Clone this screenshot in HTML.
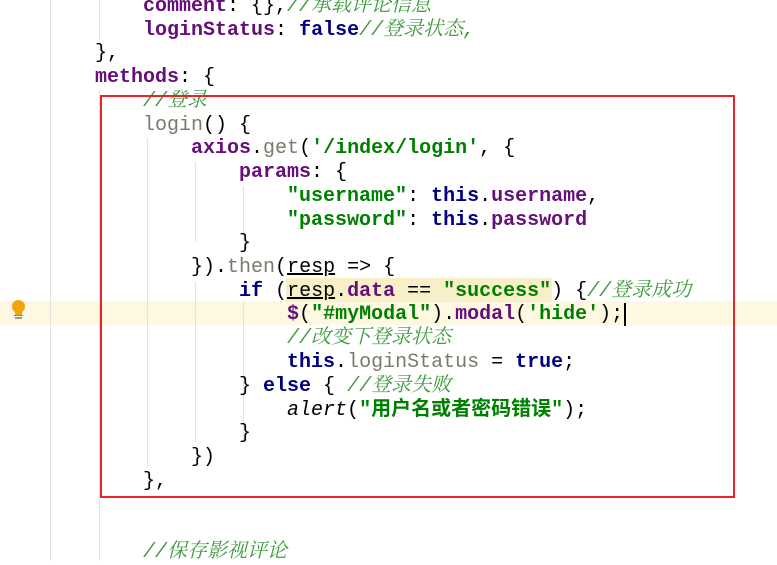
<!DOCTYPE html><html><head><meta charset="utf-8"><style>
body{margin:0;width:777px;height:561px;overflow:hidden;background:#fff;position:relative;font-family:"Liberation Mono","Noto Sans CJK SC",monospace;font-size:20px}
.ln{position:absolute;left:95px;height:24px;line-height:24px;white-space:pre;color:#000}
.k{color:#660e7a;font-weight:bold}.kw{color:#000080;font-weight:bold}.s{color:#008000;font-weight:bold}
.c{color:#3d9a3d;font-style:italic;font-family:"Liberation Mono","Noto Serif CJK SC",monospace}.g{color:#7a7a6a}
.u{text-decoration:underline}
.gl{position:absolute;width:1px;background:#e2e2e2}
</style></head><body>
<div style="position:absolute;left:0;top:301px;width:777px;height:24px;background:#fef8e2"></div>
<div style="position:absolute;left:286px;top:278px;width:266px;height:24px;background:#f6efc8"></div>
<div class="gl" style="left:50px;top:0;height:561px"></div>
<div class="gl" style="left:99px;top:0;height:40px"></div>
<div class="gl" style="left:99px;top:90px;height:471px"></div>
<div class="gl" style="left:147px;top:138px;height:330px"></div>
<div class="gl" style="left:195px;top:162px;height:80px"></div>
<div class="gl" style="left:195px;top:282px;height:160px"></div>
<div class="gl" style="left:243px;top:186px;height:56px"></div>
<div class="gl" style="left:243px;top:302px;height:140px"></div>
<div class="ln" style="top:-5px">    <span class="k">comment</span>: {},<span class="c">//承载评论信息</span></div>
<div class="ln" style="top:19px">    <span class="k">loginStatus</span>: <span class="kw">false</span><span class="c">//登录状态,</span></div>
<div class="ln" style="top:42px">},</div>
<div class="ln" style="top:66px"><span class="k">methods</span>: {</div>
<div class="ln" style="top:90px">    <span class="c">//登录</span></div>
<div class="ln" style="top:114px">    <span class="g">login</span>() {</div>
<div class="ln" style="top:137px">        <span class="k">axios</span>.<span class="g">get</span>(<span class="s">'/index/login'</span>, {</div>
<div class="ln" style="top:161px">            <span class="k">params</span>: {</div>
<div class="ln" style="top:185px">                <span class="s">"username"</span>: <span class="kw">this</span>.<span class="k">username</span>,</div>
<div class="ln" style="top:209px">                <span class="s">"password"</span>: <span class="kw">this</span>.<span class="k">password</span></div>
<div class="ln" style="top:232px">            }</div>
<div class="ln" style="top:256px">        }).<span class="g">then</span>(<span class="u">resp</span> =&gt; {</div>
<div class="ln" style="top:280px">            <span class="kw">if</span> (<span class="u">resp</span>.<span class="k">data</span> == <span class="s">"success"</span>) {<span class="c">//登录成功</span></div>
<div class="ln" style="top:303px">                <span class="k">$</span>(<span class="s">"#myModal"</span>).<span class="k">modal</span>(<span class="s">'hide'</span>);<span style="border-left:2px solid #000;margin-left:1px"></span></div>
<div class="ln" style="top:327px">                <span class="c">//改变下登录状态</span></div>
<div class="ln" style="top:351px">                <span class="kw">this</span>.<span class="g">loginStatus</span> = <span class="kw">true</span>;</div>
<div class="ln" style="top:375px">            } <span class="kw">else</span> { <span class="c">//登录失败</span></div>
<div class="ln" style="top:399px">                <i>alert</i>(<span class="s">"用户名或者密码错误"</span>);</div>
<div class="ln" style="top:422px">            }</div>
<div class="ln" style="top:446px">        })</div>
<div class="ln" style="top:470px">    },</div>
<div class="ln" style="top:541px">    <span class="c">//保存影视评论</span></div>
<div style="position:absolute;left:100px;top:95px;width:631px;height:399px;border:2.5px solid #e8232e"></div>
<div style="position:absolute;left:12px;top:300px;width:13px;height:13px;border-radius:50%;background:#f0a30a"></div>
<div style="position:absolute;left:15px;top:311px;width:7px;height:4px;background:#f0a30a"></div>
<div style="position:absolute;left:14px;top:315px;width:9px;height:1px;background:#888"></div>
<div style="position:absolute;left:15px;top:317px;width:7px;height:2px;background:#999"></div>
</body></html>
